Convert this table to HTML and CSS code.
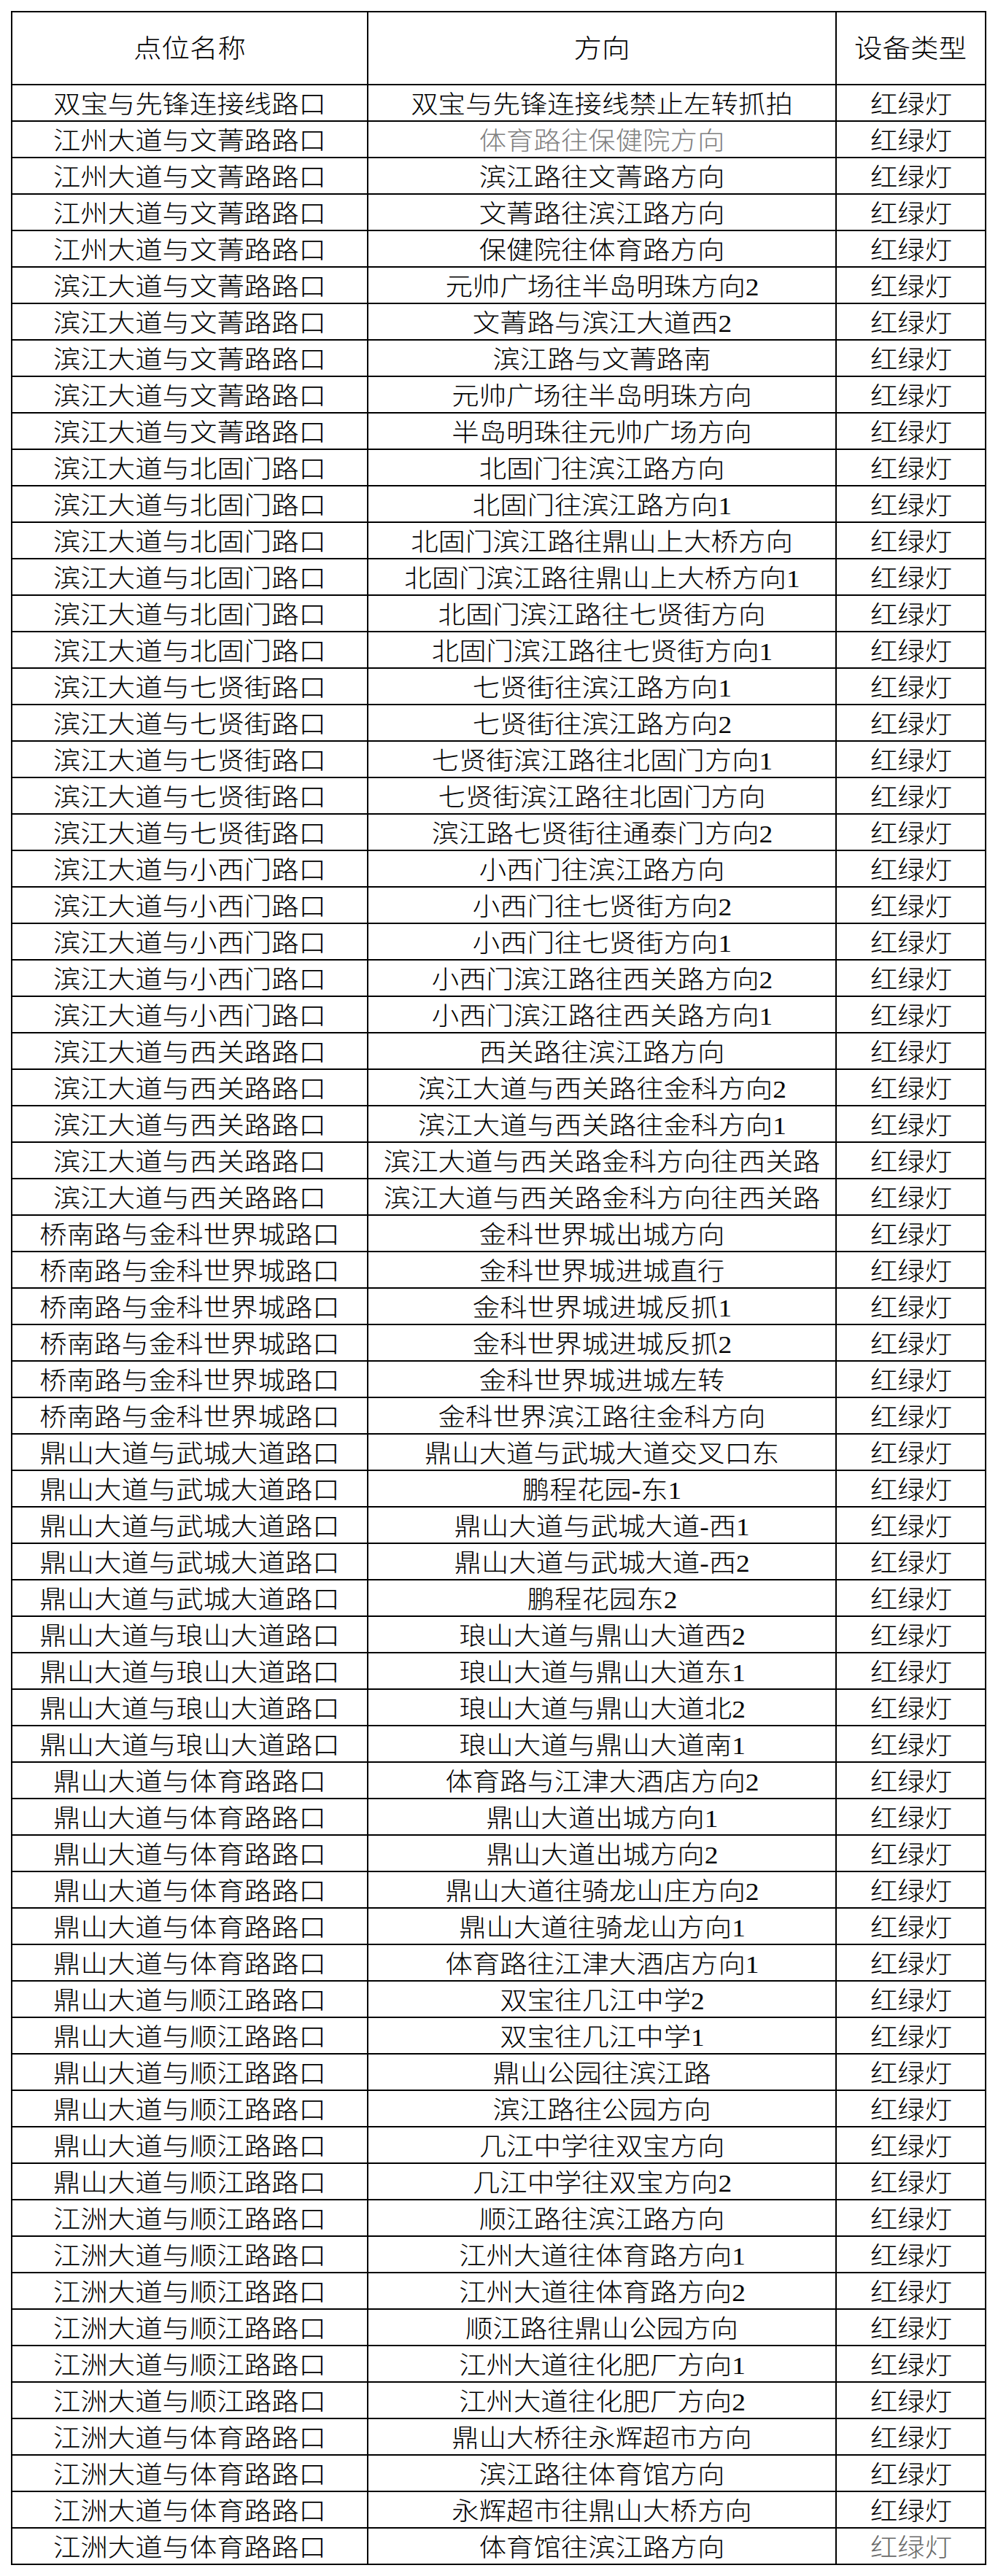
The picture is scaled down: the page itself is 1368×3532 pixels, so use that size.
FILE: index.html
```html
<!DOCTYPE html>
<html lang="zh-CN">
<head>
<meta charset="utf-8">
<title>设备点位表</title>
<link rel="stylesheet" href="styles.css">
</head>
<body>
<table class="sheet">
<colgroup><col class="c-name"><col class="c-dir"><col class="c-type"></colgroup>
<thead>
<tr class="head"><th><span class="t">点位名称</span></th><th><span class="t">方向</span></th><th><span class="t">设备类型</span></th></tr>
</thead>
<tbody>
<tr><td><span class="t">双宝与先锋连接线路口</span></td><td><span class="t">双宝与先锋连接线禁止左转抓拍</span></td><td><span class="t">红绿灯</span></td></tr>
<tr><td><span class="t">江州大道与文菁路路口</span></td><td class="muted"><span class="t">体育路往保健院方向</span></td><td><span class="t">红绿灯</span></td></tr>
<tr><td><span class="t">江州大道与文菁路路口</span></td><td><span class="t">滨江路往文菁路方向</span></td><td><span class="t">红绿灯</span></td></tr>
<tr><td><span class="t">江州大道与文菁路路口</span></td><td><span class="t">文菁路往滨江路方向</span></td><td><span class="t">红绿灯</span></td></tr>
<tr><td><span class="t">江州大道与文菁路路口</span></td><td><span class="t">保健院往体育路方向</span></td><td><span class="t">红绿灯</span></td></tr>
<tr><td><span class="t">滨江大道与文菁路路口</span></td><td><span class="t">元帅广场往半岛明珠方向2</span></td><td><span class="t">红绿灯</span></td></tr>
<tr><td><span class="t">滨江大道与文菁路路口</span></td><td><span class="t">文菁路与滨江大道西2</span></td><td><span class="t">红绿灯</span></td></tr>
<tr><td><span class="t">滨江大道与文菁路路口</span></td><td><span class="t">滨江路与文菁路南</span></td><td><span class="t">红绿灯</span></td></tr>
<tr><td><span class="t">滨江大道与文菁路路口</span></td><td><span class="t">元帅广场往半岛明珠方向</span></td><td><span class="t">红绿灯</span></td></tr>
<tr><td><span class="t">滨江大道与文菁路路口</span></td><td><span class="t">半岛明珠往元帅广场方向</span></td><td><span class="t">红绿灯</span></td></tr>
<tr><td><span class="t">滨江大道与北固门路口</span></td><td><span class="t">北固门往滨江路方向</span></td><td><span class="t">红绿灯</span></td></tr>
<tr><td><span class="t">滨江大道与北固门路口</span></td><td><span class="t">北固门往滨江路方向1</span></td><td><span class="t">红绿灯</span></td></tr>
<tr><td><span class="t">滨江大道与北固门路口</span></td><td><span class="t">北固门滨江路往鼎山上大桥方向</span></td><td><span class="t">红绿灯</span></td></tr>
<tr><td><span class="t">滨江大道与北固门路口</span></td><td><span class="t">北固门滨江路往鼎山上大桥方向1</span></td><td><span class="t">红绿灯</span></td></tr>
<tr><td><span class="t">滨江大道与北固门路口</span></td><td><span class="t">北固门滨江路往七贤街方向</span></td><td><span class="t">红绿灯</span></td></tr>
<tr><td><span class="t">滨江大道与北固门路口</span></td><td><span class="t">北固门滨江路往七贤街方向1</span></td><td><span class="t">红绿灯</span></td></tr>
<tr><td><span class="t">滨江大道与七贤街路口</span></td><td><span class="t">七贤街往滨江路方向1</span></td><td><span class="t">红绿灯</span></td></tr>
<tr><td><span class="t">滨江大道与七贤街路口</span></td><td><span class="t">七贤街往滨江路方向2</span></td><td><span class="t">红绿灯</span></td></tr>
<tr><td><span class="t">滨江大道与七贤街路口</span></td><td><span class="t">七贤街滨江路往北固门方向1</span></td><td><span class="t">红绿灯</span></td></tr>
<tr><td><span class="t">滨江大道与七贤街路口</span></td><td><span class="t">七贤街滨江路往北固门方向</span></td><td><span class="t">红绿灯</span></td></tr>
<tr><td><span class="t">滨江大道与七贤街路口</span></td><td><span class="t">滨江路七贤街往通泰门方向2</span></td><td><span class="t">红绿灯</span></td></tr>
<tr><td><span class="t">滨江大道与小西门路口</span></td><td><span class="t">小西门往滨江路方向</span></td><td><span class="t">红绿灯</span></td></tr>
<tr><td><span class="t">滨江大道与小西门路口</span></td><td><span class="t">小西门往七贤街方向2</span></td><td><span class="t">红绿灯</span></td></tr>
<tr><td><span class="t">滨江大道与小西门路口</span></td><td><span class="t">小西门往七贤街方向1</span></td><td><span class="t">红绿灯</span></td></tr>
<tr><td><span class="t">滨江大道与小西门路口</span></td><td><span class="t">小西门滨江路往西关路方向2</span></td><td><span class="t">红绿灯</span></td></tr>
<tr><td><span class="t">滨江大道与小西门路口</span></td><td><span class="t">小西门滨江路往西关路方向1</span></td><td><span class="t">红绿灯</span></td></tr>
<tr><td><span class="t">滨江大道与西关路路口</span></td><td><span class="t">西关路往滨江路方向</span></td><td><span class="t">红绿灯</span></td></tr>
<tr><td><span class="t">滨江大道与西关路路口</span></td><td><span class="t">滨江大道与西关路往金科方向2</span></td><td><span class="t">红绿灯</span></td></tr>
<tr><td><span class="t">滨江大道与西关路路口</span></td><td><span class="t">滨江大道与西关路往金科方向1</span></td><td><span class="t">红绿灯</span></td></tr>
<tr><td><span class="t">滨江大道与西关路路口</span></td><td><span class="t">滨江大道与西关路金科方向往西关路</span></td><td><span class="t">红绿灯</span></td></tr>
<tr><td><span class="t">滨江大道与西关路路口</span></td><td><span class="t">滨江大道与西关路金科方向往西关路</span></td><td><span class="t">红绿灯</span></td></tr>
<tr><td><span class="t">桥南路与金科世界城路口</span></td><td><span class="t">金科世界城出城方向</span></td><td><span class="t">红绿灯</span></td></tr>
<tr><td><span class="t">桥南路与金科世界城路口</span></td><td><span class="t">金科世界城进城直行</span></td><td><span class="t">红绿灯</span></td></tr>
<tr><td><span class="t">桥南路与金科世界城路口</span></td><td><span class="t">金科世界城进城反抓1</span></td><td><span class="t">红绿灯</span></td></tr>
<tr><td><span class="t">桥南路与金科世界城路口</span></td><td><span class="t">金科世界城进城反抓2</span></td><td><span class="t">红绿灯</span></td></tr>
<tr><td><span class="t">桥南路与金科世界城路口</span></td><td><span class="t">金科世界城进城左转</span></td><td><span class="t">红绿灯</span></td></tr>
<tr><td><span class="t">桥南路与金科世界城路口</span></td><td><span class="t">金科世界滨江路往金科方向</span></td><td><span class="t">红绿灯</span></td></tr>
<tr><td><span class="t">鼎山大道与武城大道路口</span></td><td><span class="t">鼎山大道与武城大道交叉口东</span></td><td><span class="t">红绿灯</span></td></tr>
<tr><td><span class="t">鼎山大道与武城大道路口</span></td><td><span class="t">鹏程花园-东1</span></td><td><span class="t">红绿灯</span></td></tr>
<tr><td><span class="t">鼎山大道与武城大道路口</span></td><td><span class="t">鼎山大道与武城大道-西1</span></td><td><span class="t">红绿灯</span></td></tr>
<tr><td><span class="t">鼎山大道与武城大道路口</span></td><td><span class="t">鼎山大道与武城大道-西2</span></td><td><span class="t">红绿灯</span></td></tr>
<tr><td><span class="t">鼎山大道与武城大道路口</span></td><td><span class="t">鹏程花园东2</span></td><td><span class="t">红绿灯</span></td></tr>
<tr><td><span class="t">鼎山大道与琅山大道路口</span></td><td><span class="t">琅山大道与鼎山大道西2</span></td><td><span class="t">红绿灯</span></td></tr>
<tr><td><span class="t">鼎山大道与琅山大道路口</span></td><td><span class="t">琅山大道与鼎山大道东1</span></td><td><span class="t">红绿灯</span></td></tr>
<tr><td><span class="t">鼎山大道与琅山大道路口</span></td><td><span class="t">琅山大道与鼎山大道北2</span></td><td><span class="t">红绿灯</span></td></tr>
<tr><td><span class="t">鼎山大道与琅山大道路口</span></td><td><span class="t">琅山大道与鼎山大道南1</span></td><td><span class="t">红绿灯</span></td></tr>
<tr><td><span class="t">鼎山大道与体育路路口</span></td><td><span class="t">体育路与江津大酒店方向2</span></td><td><span class="t">红绿灯</span></td></tr>
<tr><td><span class="t">鼎山大道与体育路路口</span></td><td><span class="t">鼎山大道出城方向1</span></td><td><span class="t">红绿灯</span></td></tr>
<tr><td><span class="t">鼎山大道与体育路路口</span></td><td><span class="t">鼎山大道出城方向2</span></td><td><span class="t">红绿灯</span></td></tr>
<tr><td><span class="t">鼎山大道与体育路路口</span></td><td><span class="t">鼎山大道往骑龙山庄方向2</span></td><td><span class="t">红绿灯</span></td></tr>
<tr><td><span class="t">鼎山大道与体育路路口</span></td><td><span class="t">鼎山大道往骑龙山方向1</span></td><td><span class="t">红绿灯</span></td></tr>
<tr><td><span class="t">鼎山大道与体育路路口</span></td><td><span class="t">体育路往江津大酒店方向1</span></td><td><span class="t">红绿灯</span></td></tr>
<tr><td><span class="t">鼎山大道与顺江路路口</span></td><td><span class="t">双宝往几江中学2</span></td><td><span class="t">红绿灯</span></td></tr>
<tr><td><span class="t">鼎山大道与顺江路路口</span></td><td><span class="t">双宝往几江中学1</span></td><td><span class="t">红绿灯</span></td></tr>
<tr><td><span class="t">鼎山大道与顺江路路口</span></td><td><span class="t">鼎山公园往滨江路</span></td><td><span class="t">红绿灯</span></td></tr>
<tr><td><span class="t">鼎山大道与顺江路路口</span></td><td><span class="t">滨江路往公园方向</span></td><td><span class="t">红绿灯</span></td></tr>
<tr><td><span class="t">鼎山大道与顺江路路口</span></td><td><span class="t">几江中学往双宝方向</span></td><td><span class="t">红绿灯</span></td></tr>
<tr><td><span class="t">鼎山大道与顺江路路口</span></td><td><span class="t">几江中学往双宝方向2</span></td><td><span class="t">红绿灯</span></td></tr>
<tr><td><span class="t">江洲大道与顺江路路口</span></td><td><span class="t">顺江路往滨江路方向</span></td><td><span class="t">红绿灯</span></td></tr>
<tr><td><span class="t">江洲大道与顺江路路口</span></td><td><span class="t">江州大道往体育路方向1</span></td><td><span class="t">红绿灯</span></td></tr>
<tr><td><span class="t">江洲大道与顺江路路口</span></td><td><span class="t">江州大道往体育路方向2</span></td><td><span class="t">红绿灯</span></td></tr>
<tr><td><span class="t">江洲大道与顺江路路口</span></td><td><span class="t">顺江路往鼎山公园方向</span></td><td><span class="t">红绿灯</span></td></tr>
<tr><td><span class="t">江洲大道与顺江路路口</span></td><td><span class="t">江州大道往化肥厂方向1</span></td><td><span class="t">红绿灯</span></td></tr>
<tr><td><span class="t">江洲大道与顺江路路口</span></td><td><span class="t">江州大道往化肥厂方向2</span></td><td><span class="t">红绿灯</span></td></tr>
<tr><td><span class="t">江洲大道与体育路路口</span></td><td><span class="t">鼎山大桥往永辉超市方向</span></td><td><span class="t">红绿灯</span></td></tr>
<tr><td><span class="t">江洲大道与体育路路口</span></td><td><span class="t">滨江路往体育馆方向</span></td><td><span class="t">红绿灯</span></td></tr>
<tr><td><span class="t">江洲大道与体育路路口</span></td><td><span class="t">永辉超市往鼎山大桥方向</span></td><td><span class="t">红绿灯</span></td></tr>
<tr><td><span class="t">江洲大道与体育路路口</span></td><td><span class="t">体育馆往滨江路方向</span></td><td class="faded"><span class="t">红绿灯</span></td></tr>
</tbody>
</table>
</body>
</html>
```

FILE: styles.css
```css
html, body {
  margin: 0;
  padding: 0;
  background: #ffffff;
}

body {
  padding: 15px 0 0 15px;
  font-family: "Liberation Serif", "Noto Sans CJK SC", serif;
  font-weight: 300;
  color: #000000;
}

.sheet {
  border-collapse: collapse;
  table-layout: fixed;
  width: 1337px;
}

.c-name { width: 488px; }
.c-dir  { width: 642px; }
.c-type { width: 205px; }

.sheet th,
.sheet td {
  border: 2px solid #000000;
  padding: 0;
  text-align: center;
  vertical-align: middle;
  white-space: nowrap;
  overflow: visible;
}

.sheet th {
  height: 98px;
  font-weight: 300;
  font-size: 35px;
  line-height: 40px;
}

.sheet td {
  height: 48px;
  font-size: 34px;
  line-height: 40px;
}

.t {
  display: inline-block;
  transform: scaleX(1.1);
  transform-origin: 50% 50%;
  position: relative;
  top: 3px;
}

.sheet th .t {
  top: 2px;
}

.muted {
  color: #7f7f7f;
}

.faded {
  color: #6a6a6a;
}
```
